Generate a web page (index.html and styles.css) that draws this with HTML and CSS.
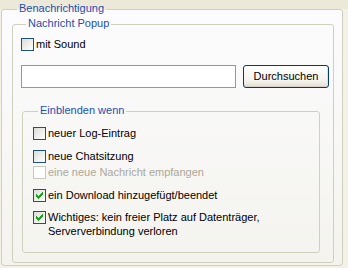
FILE: index.html
```html
<!DOCTYPE html>
<html>
<head>
<meta charset="utf-8">
<link rel="stylesheet" href="styles.css">
</head>
<body>
<fieldset class="group outer">
  <legend>Benachrichtigung</legend>
  <fieldset class="group popup">
    <legend>Nachricht Popup</legend>
    <label class="row sound"><span class="cb"></span>mit Sound</label>
    <div class="file-row">
      <input class="path" type="text">
      <button class="btn" type="button">Durchsuchen</button>
    </div>
    <fieldset class="group when">
      <legend>Einblenden wenn</legend>
      <label class="row r1"><span class="cb"></span>neuer Log-Eintrag</label>
      <label class="row r2"><span class="cb"></span>neue Chatsitzung</label>
      <label class="row r3 disabled"><span class="cb"></span>eine neue Nachricht empfangen</label>
      <label class="row r4"><span class="cb"><svg width="13" height="13" viewBox="0 0 13 13" shape-rendering="crispEdges"><path fill="#21A121" d="M9 3h1v1h-1z M8 4h2v1h-2z M3 5h1v1h-1z M7 5h3v1h-3z M3 6h2v1h-2z M6 6h3v1h-3z M3 7h5v1h-5z M4 8h3v1h-3z M5 9h1v1h-1z"/></svg></span>ein Download hinzugefügt/beendet</label>
      <label class="row r5"><span class="cb"><svg width="13" height="13" viewBox="0 0 13 13" shape-rendering="crispEdges"><path fill="#21A121" d="M9 3h1v1h-1z M8 4h2v1h-2z M3 5h1v1h-1z M7 5h3v1h-3z M3 6h2v1h-2z M6 6h3v1h-3z M3 7h5v1h-5z M4 8h3v1h-3z M5 9h1v1h-1z"/></svg></span><span class="multi">Wichtiges: kein freier Platz auf Datenträger,<br>Serververbindung verloren</span></label>
    </fieldset>
  </fieldset>
</fieldset>
</body>
</html>
```
FILE: styles.css
```css
* { box-sizing: border-box; }
html, body { margin: 0; }
body {
  width: 348px;
  height: 268px;
  overflow: hidden;
  padding-top: 2px;
  background: linear-gradient(#ECE9D8 0, #ECE9D8 9px, #F4F2E8 9px);
  font: 11px/13px "Liberation Sans", Arial, sans-serif;
  color: #000;
}
.group {
  border: 1px solid #D0D0BF;
  border-radius: 3px;
  margin: 0;
  padding: 0;
  min-width: 0;
}
.group > legend {
  color: #1D4FB0;
  line-height: 13px;
  padding: 0 2px 2px;
  margin-left: 5px;
}
.outer {
  margin-left: 1px;
  width: 342px;
  padding: 0 8px 2px 10px;
  background: linear-gradient(#FCFCFE, #F4F3EE);
}
.popup {
  padding: 0 4px 0 8px;
}
.row {
  display: flex;
  align-items: center;
  height: 17px;
  white-space: nowrap;
}
.cb {
  flex: none;
  width: 13px;
  height: 13px;
  margin-right: 2px;
  border: 1px solid #1C5180;
  background: linear-gradient(135deg, #DCDCD7, #FFFFFF);
  position: relative;
}
.cb svg {
  position: absolute;
  left: -1px;
  top: -1px;
  display: block;
}
.sound { margin-top: 4px; }
.file-row {
  display: flex;
  align-items: flex-start;
  gap: 7px;
  margin-top: 12px;
}
.path {
  flex: 1;
  min-width: 0;
  height: 23px;
  margin: 0;
  border: 1px solid #7F9DB9;
  background: #fff;
  font: inherit;
  padding: 0 3px;
}
.btn {
  flex: none;
  width: 86px;
  height: 23px;
  margin: 0;
  padding: 0;
  border: 1px solid #003C74;
  border-radius: 3px;
  background: linear-gradient(#FFFFFF, #F4F3EE 70%, #E2DFD4);
  box-shadow: inset 0 -1px 0 #D6D0C5, inset -1px 0 0 #E3E0D6;
  font: inherit;
  color: #000;
}
.when {
  margin: 16px 9px 9px 1px;
  padding: 0 0 14px 10px;
}
.r1 { margin-top: 6px; }
.r2 { margin-top: 6px; }
.r3 { height: 15px; }
.r4 { margin-top: 7px; }
.r5 {
  margin-top: 6px;
  height: auto;
  align-items: flex-start;
}
.r5 .cb { margin-top: 1px; }
.multi { line-height: 14px; }
.disabled { color: #ACA899; }
.disabled .cb {
  border-color: #CAC8BB;
  background: #fff;
}
```
